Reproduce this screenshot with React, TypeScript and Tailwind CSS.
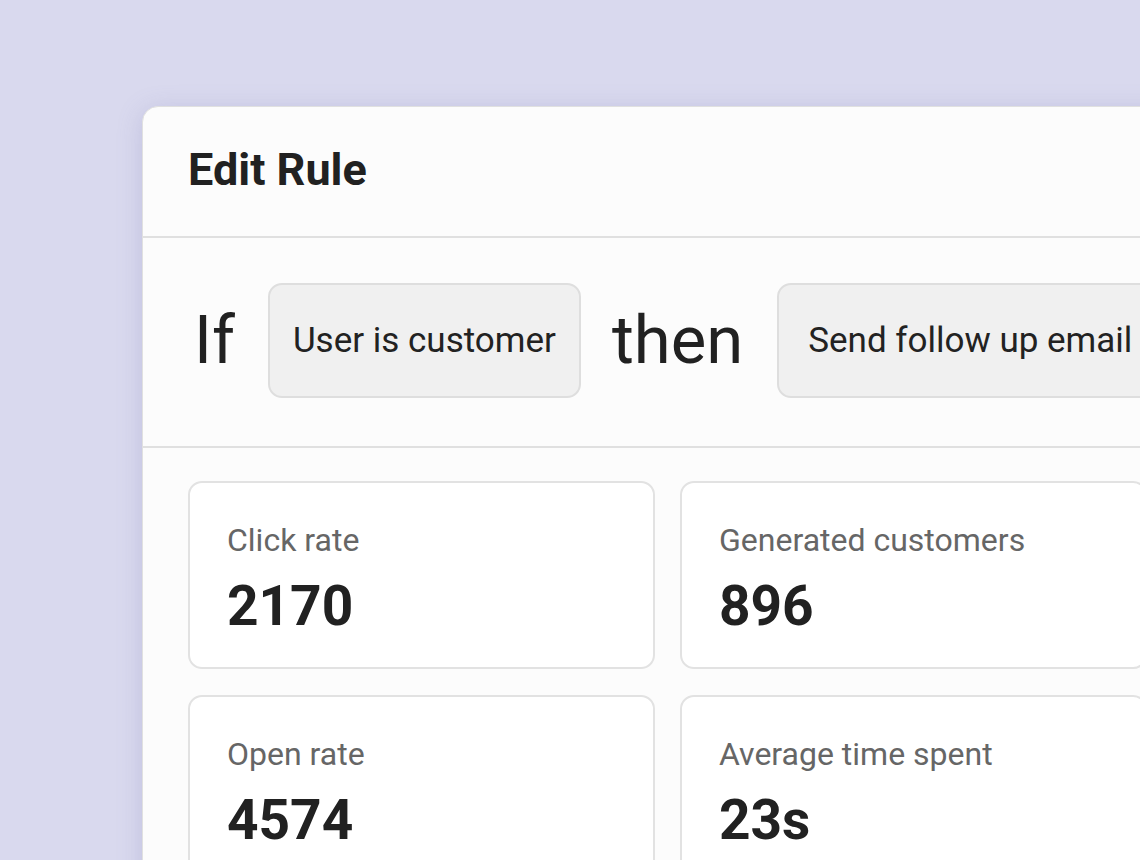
import React from 'react';

type Stat = { label: string; value: string };

const stats: Stat[] = [
  { label: 'Click rate', value: '2170' },
  { label: 'Generated customers', value: '896' },
  { label: 'Open rate', value: '4574' },
  { label: 'Average time spent', value: '23s' },
];

const StatCard: React.FC<Stat> = ({ label, value }) => (
  <div className="h-[188px] rounded-[14px] border-2 border-[#e2e2e2] bg-white px-[37px] pt-[38px]">
    <div className="text-[32px] leading-[38px] text-[#666666] whitespace-nowrap">{label}</div>
    <div className="mt-[14px] text-[55px] leading-[66px] font-bold text-[#212121]">{value}</div>
  </div>
);

const Pill: React.FC<{ children: React.ReactNode; className?: string }> = ({ children, className = 'px-[23px]' }) => (
  <div className={`shrink-0 rounded-[14px] border-2 border-[#dedede] bg-[#f0f0f0] pt-[38px] pb-[38px] text-[35px] leading-none text-[#222222] whitespace-nowrap ${className}`}>
    {children}
  </div>
);

export default function App() {
  return (
    <div
      className="h-screen w-screen overflow-hidden bg-[#d9d9ee] pl-[142px] pt-[106px]"
      style={{ fontFamily: 'Roboto, "Noto Sans", sans-serif' }}
    >
      <div className="w-[1060px] rounded-tl-[16px] rounded-tr-[16px] border border-[#e0e0e0] bg-[#fcfcfc] shadow-[0_4px_24px_rgba(120,120,180,0.25)]">
        {/* Header */}
        <div className="flex h-[131px] items-center border-b-2 border-[#e0e0e0] px-[45px] pb-[4px]">
          <h1 className="text-[45px] leading-none font-bold text-[#212121]">Edit Rule</h1>
        </div>

        {/* Rule row */}
        <div className="flex items-center border-b-2 border-[#e0e0e0] px-[45px] pt-[45px] pb-[48px] whitespace-nowrap">
          <span className="ml-[6px] text-[66px] leading-none text-[#212121]">If</span>
          <div className="ml-[33px]">
            <Pill>User is customer</Pill>
          </div>
          <span className="ml-[31px] text-[67px] leading-none text-[#212121]">then</span>
          <div className="ml-[34px]">
            <Pill className="pl-[29px] pr-[23px]">Send follow up email</Pill>
          </div>
        </div>

        {/* Stats */}
        <div className="grid grid-cols-[467px_467px] gap-x-[25px] gap-y-[26px] px-[45px] pt-[33px] pb-[40px]">
          {stats.map((s) => (
            <StatCard key={s.label} label={s.label} value={s.value} />
          ))}
        </div>
      </div>
    </div>
  );
}
